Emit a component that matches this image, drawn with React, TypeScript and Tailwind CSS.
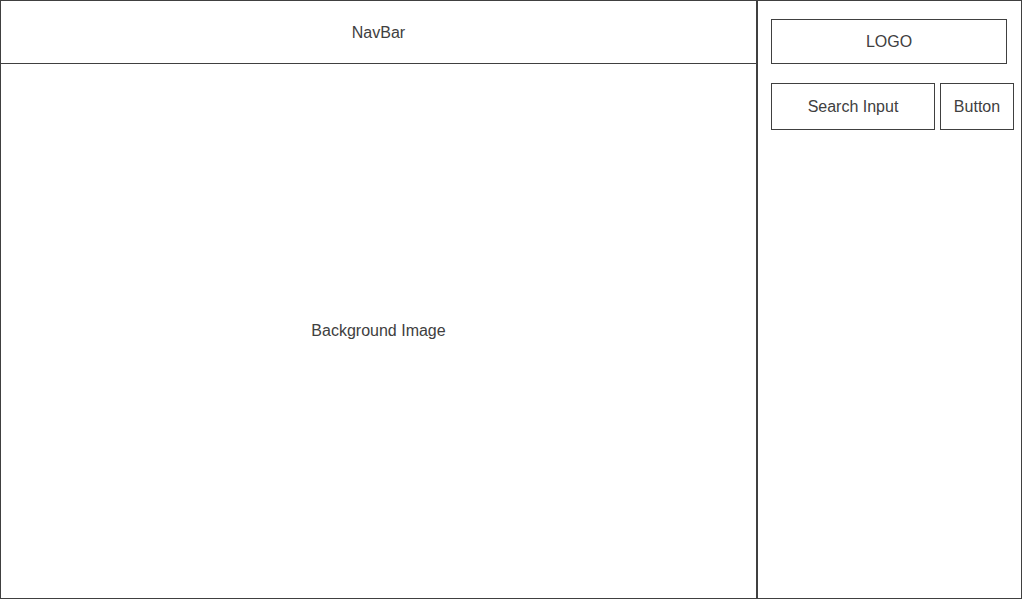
export default function App() {
  return (
    <div
      className="flex w-[1024px] h-[600px] bg-white text-[#404040] text-[16px]"
      style={{ fontFamily: '"Liberation Sans", Arial, sans-serif' }}
    >
      <div className="flex flex-col w-[757px] h-[599px] border border-[#404040]">
        <div className="flex items-center justify-center h-[63px] pt-[2px] border-b border-[#404040]">
          NavBar
        </div>
        <div className="flex flex-1 items-center justify-center">Background Image</div>
      </div>
      <div className="flex flex-col w-[265px] h-[599px] border border-[#404040] pl-[13px] pt-[18px]">
        <div className="flex items-center justify-center w-[236px] h-[45px] pt-[1px] border border-[#404040]">
          LOGO
        </div>
        <div className="flex gap-[5px] mt-[19px]">
          <div className="flex items-center justify-center w-[164px] h-[47px] pt-[1px] border border-[#404040]">
            Search Input
          </div>
          <div className="flex items-center justify-center w-[74px] h-[47px] pt-[1px] border border-[#404040]">
            Button
          </div>
        </div>
      </div>
    </div>
  );
}
